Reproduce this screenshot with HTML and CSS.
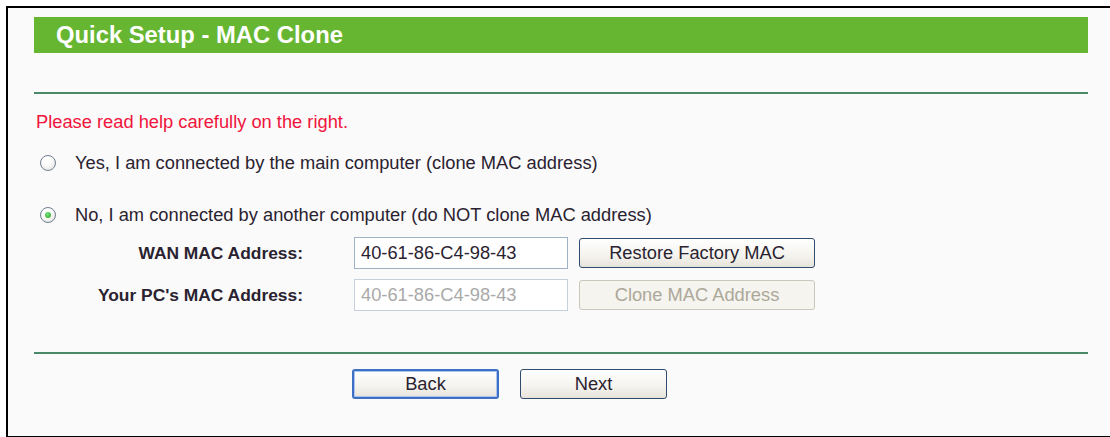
FILE: index.html
```html
<!DOCTYPE html>
<html lang="en">
<head>
    <meta charset="UTF-8">
    <title>Quick Setup - MAC Clone</title>
    <link rel="stylesheet" href="styles.css">
</head>
<body>
    <div class="frame">
        <div class="title">Quick Setup - MAC Clone</div>
        <div class="rule rule-top"></div>

        <p class="notice">Please read help carefully on the right.</p>

        <label class="option option-first">
            <input type="radio" name="clone" value="yes">
            <span>Yes, I am connected by the main computer (clone MAC address)</span>
        </label>
        <label class="option option-second">
            <input type="radio" name="clone" value="no" checked>
            <span>No, I am connected by another computer (do NOT clone MAC address)</span>
        </label>

        <div class="mac-form">
            <span class="mac-label">WAN MAC Address:</span>
            <input type="text" class="mac-input" value="40-61-86-C4-98-43">
            <button class="btn btn-wide">Restore Factory MAC</button>

            <span class="mac-label">Your PC's MAC Address:</span>
            <input type="text" class="mac-input" value="40-61-86-C4-98-43" disabled>
            <button class="btn btn-wide" disabled>Clone MAC Address</button>
        </div>

        <div class="rule rule-bottom"></div>

        <div class="nav">
            <button class="btn btn-nav btn-focus">Back</button>
            <button class="btn btn-nav">Next</button>
        </div>
    </div>
</body>
</html>
```

FILE: styles.css
```css
body {
    margin: 0;
    background: #fff;
    overflow: hidden;
    font-family: "Liberation Sans", Arial, sans-serif;
    font-size: 18.3px;
    color: #2a2230;
}
.frame {
    margin: 6px 0 0 6px;
    width: 1130px;
    height: 432px;
    box-sizing: border-box;
    border: 2px solid #000;
    border-right: none;
    background: #fafafa;
    padding: 9px 0 0 26px;
}
.title {
    width: 1054px;
    height: 36px;
    box-sizing: border-box;
    padding-left: 22px;
    background: #66b632;
    color: #fff;
    font-size: 23.8px;
    font-weight: bold;
    line-height: 36px;
}
.rule {
    width: 1054px;
    border-top: 2px solid #4a8867;
}
.rule-top {margin-top: 39px;}
.rule-bottom {margin-top: 41px;}

.notice {
    margin: 18px 0 0 2px;
    line-height: 20px;
    color: #f0143c;
}
.option {
    display: flex;
    align-items: center;
    height: 20px;
    line-height: 20px;
}
.option-first {margin-top: 21px;}
.option-second {margin-top: 32px;}
.option input {
    appearance: none;
    -webkit-appearance: none;
    width: 16px;
    height: 16px;
    margin: 0 19px 0 6px;
    border: 1.5px solid #6f7f8f;
    border-radius: 50%;
    background: radial-gradient(circle at 40% 35%, #fff 30%, #dcdcd6 100%);
    box-sizing: border-box;
    position: relative;
}
.option input:checked::after {
    content: "";
    position: absolute;
    left: 3.5px;
    top: 3.5px;
    width: 6px;
    height: 6px;
    border-radius: 50%;
    background: radial-gradient(circle at 40% 35%, #7ee27e, #21a121);
}

.mac-form {
    display: grid;
    grid-template-columns: 269px 214px 236px;
    grid-auto-rows: 32px;
    column-gap: 51px;
    row-gap: 10px;
    margin-top: 12px;
}
.mac-form .btn {margin-left: -40px; align-self: center;}
.mac-label {
    font-weight: bold;
    font-size: 17.4px;
    text-align: right;
    line-height: 32px;
}
.mac-input {
    box-sizing: border-box;
    height: 32px;
    margin: 0;
    padding: 0 6px;
    border: 1px solid #9fb1c4;
    background: #fff;
    font: inherit;
    color: #2a2230;
}
.mac-input:disabled {
    border-color: #c5d0dc;
    color: #a9a9a9;
}
.btn {
    box-sizing: border-box;
    height: 30px;
    padding: 0;
    border: 1px solid #2f4b6e;
    border-radius: 3px;
    background: linear-gradient(#ffffff, #f4f3ee 60%, #e6e3da);
    font: inherit;
    color: #2a2230;
}
.btn:disabled {
    border-color: #cac8bb;
    background: #f5f4ef;
    color: #aca899;
}
.btn-wide {width: 236px;}

.nav {
    display: flex;
    gap: 21px;
    margin: 15px 0 0 318px;
}
.btn-nav {width: 147px;}
.btn-focus {
    border: 2px solid #3d6fc4;
    box-shadow: inset 0 0 0 1px #a9c4ee;
}
```
